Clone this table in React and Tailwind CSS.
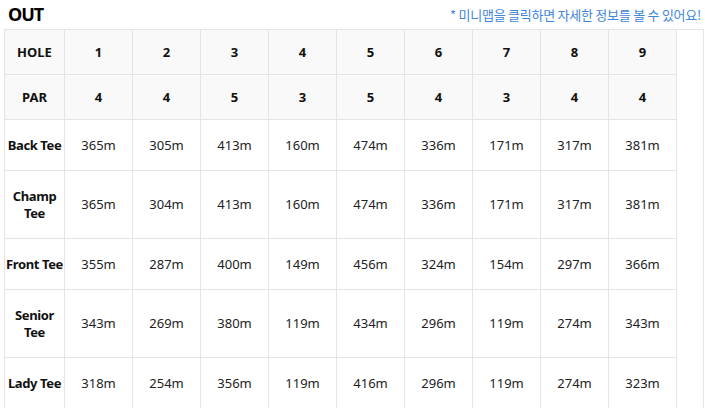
const holes = [1, 2, 3, 4, 5, 6, 7, 8, 9];
const pars = [4, 4, 5, 3, 5, 4, 3, 4, 4];

const tees = [
  { label: ['Back Tee'], h: 'h-[51px]', d: [365, 305, 413, 160, 474, 336, 171, 317, 381] },
  { label: ['Champ', 'Tee'], h: 'h-[68px]', d: [365, 304, 413, 160, 474, 336, 171, 317, 381] },
  { label: ['Front Tee'], h: 'h-[51px]', d: [355, 287, 400, 149, 456, 324, 154, 297, 366] },
  { label: ['Senior', 'Tee'], h: 'h-[68px]', d: [343, 269, 380, 119, 434, 296, 119, 274, 343] },
  { label: ['Lady Tee'], h: 'h-[51px]', d: [318, 254, 356, 119, 416, 296, 119, 274, 323] },
];

function HeadRow({ title, values }) {
  return (
    <div className="flex">
      <div className="w-[60px] h-[45px] shrink-0 flex items-center justify-center border-r border-b border-[#e4e4e4] bg-[#f9f9f9] font-bold">
        {title}
      </div>
      {values.map((v, i) => (
        <div key={i} className="w-[68px] h-[45px] shrink-0 flex items-center justify-center border-r border-b border-[#e4e4e4] bg-[#f9f9f9] font-bold">
          {v}
        </div>
      ))}
    </div>
  );
}

export default function App() {
  return (
    <div
      className="w-[705px] h-[408px] overflow-hidden bg-white px-[4px] text-[13px] leading-[17px] text-[#111]"
      style={{ fontFamily: '"Noto Sans", "Noto Sans CJK KR", sans-serif' }}
    >
      {/* Title */}
      <div className="h-[29px] flex items-center justify-between">
        <span className="pl-[4px] text-[18px] font-bold tracking-[-1px] text-black">OUT</span>
        <span className="text-[13px] text-[#3f86d8] tracking-[-0.25px]" style={{ fontFamily: '"Noto Sans CJK KR", sans-serif' }}>
          * 미니맵을 클릭하면 자세한 정보를 볼 수 있어요!
        </span>
      </div>

      {/* Scorecard */}
      <div className="w-[700px] border-t border-l border-r border-[#e4e4e4]">
        <HeadRow title="HOLE" values={holes} />
        <HeadRow title="PAR" values={pars} />
        {tees.map((t) => (
          <div key={t.label.join(' ')} className="flex">
            <div className={`w-[60px] ${t.h} shrink-0 flex flex-col items-center justify-center border-r border-b border-[#e4e4e4] font-bold whitespace-nowrap tracking-[-0.4px]`}>
              {t.label.map((l) => (
                <span key={l}>{l}</span>
              ))}
            </div>
            {t.d.map((v, i) => (
              <div key={i} className={`w-[68px] ${t.h} shrink-0 flex items-center justify-center border-r border-b border-[#e4e4e4] text-[#222]`}>
                {v}m
              </div>
            ))}
          </div>
        ))}
      </div>
    </div>
  );
}
